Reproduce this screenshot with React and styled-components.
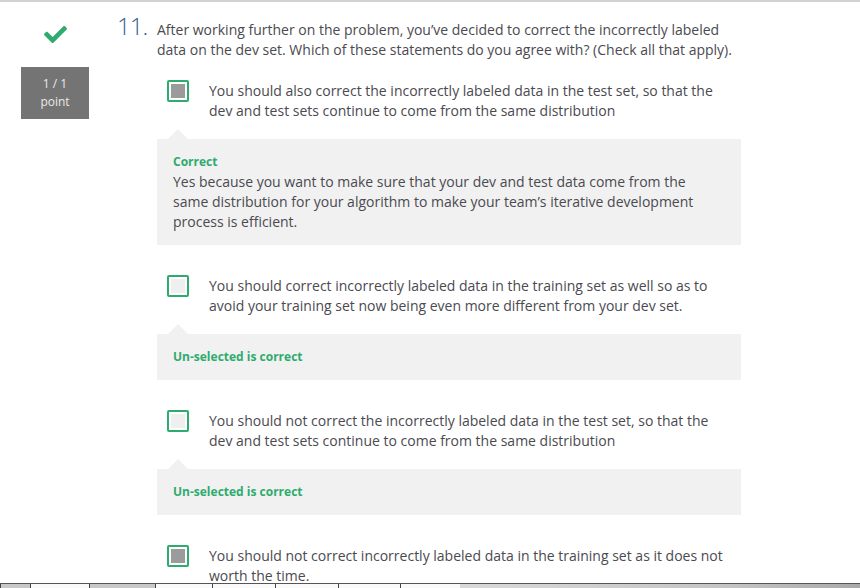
import React from 'react';
import styled, { createGlobalStyle } from 'styled-components';
import { FaCheck } from 'react-icons/fa';

const GREEN = '#2eab6e';

const GlobalStyle = createGlobalStyle`
  html, body {
    margin: 0;
    padding: 0;
    background: #fff;
  }
  body {
    font-family: "Open Sans", "Liberation Sans", Arial, sans-serif;
    color: #4a4a50;
  }
`;

const Screen = styled.div`
  width: 860px;
  height: 588px;
  display: flex;
  flex-direction: column;
  overflow: hidden;
`;

const TopRule = styled.div`
  height: 2px;
  background: #d2d2d2;
  flex-shrink: 0;
`;

const Page = styled.div`
  flex: 1;
  min-height: 0;
  overflow: hidden;
  display: flex;
  align-items: flex-start;
`;

const LeftCol = styled.aside`
  width: 110px;
  flex-shrink: 0;
  display: flex;
  flex-direction: column;
  align-items: center;
  padding-top: 21px;
  color: ${GREEN};
`;

const ScoreBox = styled.div`
  margin-top: 21px;
  width: 68px;
  height: 52px;
  background: #747474;
  color: #e9e9e9;
  font-size: 12px;
  line-height: 18px;
  display: flex;
  flex-direction: column;
  align-items: center;
  justify-content: center;
`;

const Body = styled.main`
  margin-left: 7px;
  padding-top: 14px;
  display: flex;
  flex-direction: column;
`;

const QuestionHeader = styled.div`
  display: flex;
  align-items: baseline;
`;

const Number = styled.span`
  width: 40px;
  flex-shrink: 0;
  font-size: 24px;
  font-weight: 300;
  letter-spacing: -1px;
  color: #2f5f94;
  line-height: 20px;
`;

const QuestionText = styled.p`
  margin: 0;
  width: 584px;
  font-size: 14px;
  line-height: 20px;
`;

const Answers = styled.div`
  margin-left: 40px;
  margin-top: 20px;
  width: 584px;
  display: flex;
  flex-direction: column;
`;

const OptionRow = styled.label`
  display: flex;
  align-items: flex-start;
  gap: 20px;
  padding-left: 10px;
  margin-top: ${p => (p.$first ? '0' : '30px')};
`;

const Box = styled.span`
  box-sizing: border-box;
  flex-shrink: 0;
  width: 22px;
  height: 22px;
  border: 2px solid ${GREEN};
  border-radius: 2px;
  box-shadow: inset 0 0 0 2px #fff;
  background: ${p => (p.$checked ? '#9b9b9b' : '#efefef')};
`;

const OptionText = styled.span`
  max-width: 520px;
  font-size: 14px;
  line-height: 20px;
  padding-top: 1px;
`;

const Feedback = styled.div`
  position: relative;
  margin-top: 18px;
  background: #f1f1f1;
  padding: 13px 16px;
  font-size: 14px;
  line-height: 20px;

  &::before {
    content: '';
    position: absolute;
    left: 11px;
    top: -10px;
    border-left: 10px solid transparent;
    border-right: 10px solid transparent;
    border-bottom: 10px solid #f1f1f1;
  }
`;

const Verdict = styled.div`
  color: ${GREEN};
  font-size: 12px;
  font-weight: 700;
`;

const Note = styled.div`
  max-width: 530px;
`;

const BottomBar = styled.div`
  height: 4px;
  flex-shrink: 0;
  border-top: 1px solid #555;
  display: flex;
  background: linear-gradient(90deg, #bdbdbd 0%, #d8d8d8 55%, #c4c4c4 85%, #a9a9a9 100%);
`;

const Tab = styled.div`
  width: ${p => p.$w}px;
  background: ${p => (p.$light ? '#fafafa' : '#c8c8c8')};
  border-left: 1px solid #444;
  box-sizing: border-box;
`;

const options = [
  {
    checked: true,
    text: 'You should also correct the incorrectly labeled data in the test set, so that the dev and test sets continue to come from the same distribution',
    verdict: 'Correct',
    note: 'Yes because you want to make sure that your dev and test data come from the same distribution for your algorithm to make your team’s iterative development process is efficient.',
  },
  {
    checked: false,
    text: 'You should correct incorrectly labeled data in the training set as well so as to avoid your training set now being even more different from your dev set.',
    verdict: 'Un-selected is correct',
  },
  {
    checked: false,
    text: 'You should not correct the incorrectly labeled data in the test set, so that the dev and test sets continue to come from the same distribution',
    verdict: 'Un-selected is correct',
  },
  {
    checked: true,
    text: 'You should not correct incorrectly labeled data in the training set as it does not worth the time.',
  },
];

const tabs = [
  { w: 30, light: false },
  { w: 59, light: true },
  { w: 66, light: false },
  { w: 57, light: true },
  { w: 63, light: true },
  { w: 63, light: true },
  { w: 62, light: true },
  { w: 60, light: true },
];

export default function App() {
  return (
    <Screen>
      <GlobalStyle />
      <TopRule />
      <Page>
        <LeftCol>
          <FaCheck size={23} />
          <ScoreBox>
            <span>1 / 1</span>
            <span>point</span>
          </ScoreBox>
        </LeftCol>
        <Body>
          <QuestionHeader>
            <Number>11.</Number>
            <QuestionText>
              After working further on the problem, you’ve decided to correct the incorrectly labeled
              data on the dev set. Which of these statements do you agree with? (Check all that apply).
            </QuestionText>
          </QuestionHeader>
          <Answers>
            {options.map((o, i) => (
              <React.Fragment key={i}>
                <OptionRow $first={i === 0}>
                  <Box $checked={o.checked} />
                  <OptionText>{o.text}</OptionText>
                </OptionRow>
                {o.verdict && (
                  <Feedback>
                    <Verdict>{o.verdict}</Verdict>
                    {o.note && <Note>{o.note}</Note>}
                  </Feedback>
                )}
              </React.Fragment>
            ))}
          </Answers>
        </Body>
      </Page>
      <BottomBar>
        {tabs.map((t, i) => (
          <Tab key={i} $w={t.w} $light={t.light} />
        ))}
      </BottomBar>
    </Screen>
  );
}
